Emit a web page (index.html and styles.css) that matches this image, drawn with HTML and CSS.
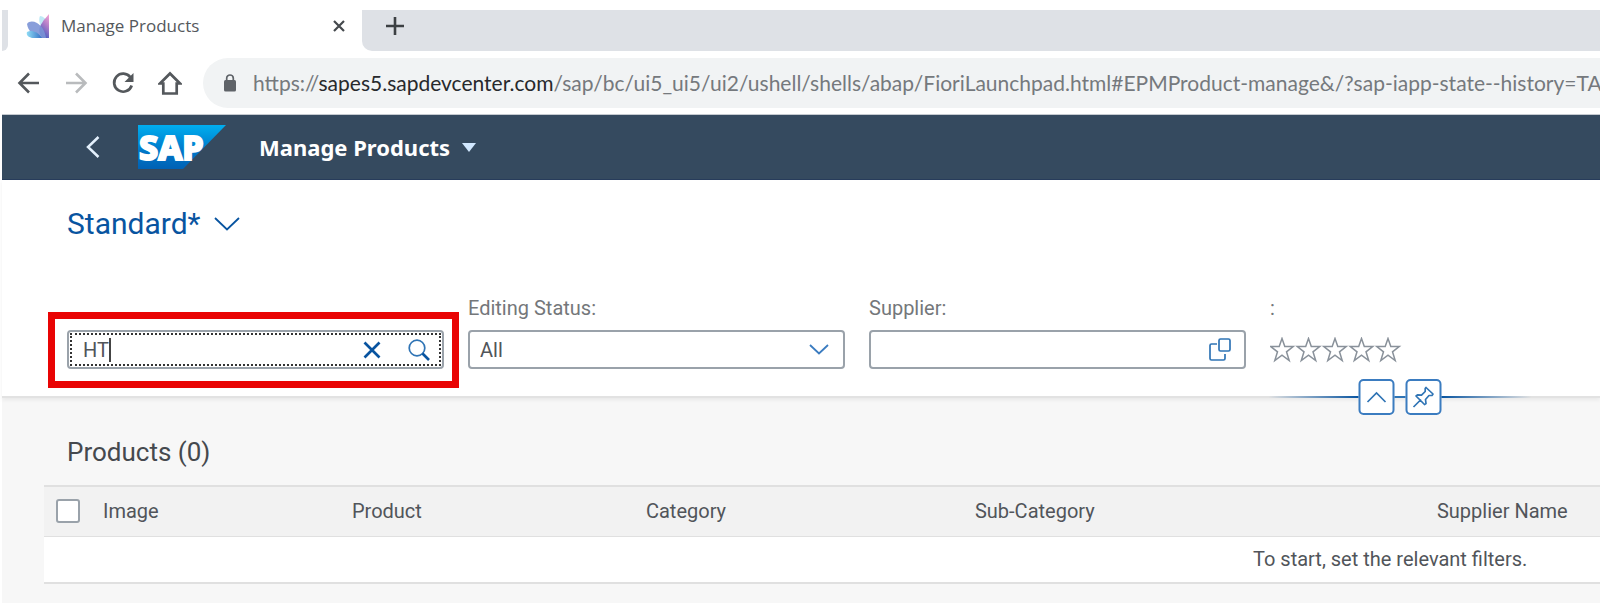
FILE: index.html
```html
<!DOCTYPE html>
<html lang="en">
<head>
<meta charset="utf-8">
<title>Manage Products</title>
<link rel="stylesheet" href="styles.css">
</head>
<body>
<div class="browser">
  <div class="tab-strip">
    <div class="tab-prev"></div>
    <div class="tab">
      <svg class="favicon" width="24" height="24" viewBox="0 0 24 24" aria-hidden="true">
        <defs>
          <linearGradient id="petal" x1="1" y1="0" x2="0.6" y2="1"><stop offset="0" stop-color="#f9a8d4"/><stop offset="0.5" stop-color="#b07cc8"/><stop offset="1" stop-color="#4a5fc0"/></linearGradient>
          <linearGradient id="base" x1="0" y1="0" x2="1" y2="0"><stop offset="0" stop-color="#8fdcf5"/><stop offset="1" stop-color="#3571c6"/></linearGradient>
        </defs>
        <path d="M14 2c3 0 6 3 8 7l-4 8C14 12 12 6 14 2z" fill="#bfe9f5"/>
        <path d="M23 0v24h-7c-4-6-3-11 0-15 2-4 5-6 7-9z" fill="url(#petal)"/>
        <path d="M1 10c2-3 6-3 10-1 5 3 8 8 9 15h-6C7 21 2 17 1 10z" fill="#7b94d6" opacity="0.9"/>
        <path d="M1 18c4-2 10-1 15 6H6c-4-1-6-3-5-6z" fill="url(#base)"/>
      </svg>
      <span class="tab-title">Manage Products</span>
      <button class="icon-button" aria-label="Close tab">
        <svg width="14" height="14" viewBox="0 0 14 14"><path d="M2 2l10 10M12 2L2 12" stroke="#45494d" stroke-width="2.2" fill="none"/></svg>
      </button>
    </div>
    <div class="tab-rest">
      <button class="icon-button" aria-label="New tab">
        <svg width="18" height="18" viewBox="0 0 18 18"><path d="M9 0v18M0 9h18" stroke="#3c4043" stroke-width="2.6" fill="none"/></svg>
      </button>
    </div>
  </div>
  <div class="toolbar">
    <div class="nav">
      <button class="icon-button" aria-label="Back"><svg width="24" height="24" viewBox="0 0 24 24"><path d="M22 12H3M12 2.500L2.500 12l9.500 9.500" stroke="#54585c" stroke-width="2.600" fill="none"/></svg></button>
      <button class="icon-button" aria-label="Forward"><svg width="24" height="24" viewBox="0 0 24 24"><path d="M2 12h19M12 2.500l9.500 9.500-9.500 9.500" stroke="#b9bbbd" stroke-width="2.600" fill="none"/></svg></button>
      <button class="icon-button" aria-label="Reload"><svg width="24" height="24" viewBox="0 0 24 24"><path d="M19.500 6.500A9 9 0 1 0 20.700 14.500" stroke="#54585c" stroke-width="2.700" fill="none"/><path d="M22.500 2v9h-9z" fill="#54585c"/></svg></button>
      <button class="icon-button" aria-label="Home"><svg width="24" height="24" viewBox="0 0 24 24"><path d="M2 12.500L12 2.500l10 10h-3.300V22.500H5.300V12.500z" stroke="#54585c" stroke-width="2.700" fill="none"/></svg></button>
    </div>
    <div class="omnibox">
      <svg width="14" height="18" viewBox="0 0 14 18" aria-hidden="true"><rect x="1" y="6" width="12" height="11.500" rx="1.500" fill="#5f6368"/><path d="M3.700 7V4.300a3.300 3.300 0 0 1 6.600 0V7" stroke="#5f6368" stroke-width="1.700" fill="none"/></svg>
      <div class="url" role="textbox" aria-label="Address">https://<span class="url-host">sapes5.sapdevcenter.com</span>/sap/bc/ui5_ui5/ui2/ushell/shells/abap/FioriLaunchpad.html#EPMProduct-manage&amp;/?sap-iapp-state--history=TASC</div>
    </div>
  </div>

  <header class="shell">
    <button class="icon-button" aria-label="Navigate back"><svg width="14" height="22" viewBox="0 0 14 22"><path d="M12.500 1L2 11l10.500 10" stroke="#e3f0fc" stroke-width="2.500" fill="none"/></svg></button>
    <a class="logo" href="#" aria-label="SAP home">
      <svg width="88" height="44" viewBox="0 0 88 44">
        <defs><linearGradient id="sap" x1="0" y1="0" x2="0" y2="1"><stop offset="0" stop-color="#00aeef"/><stop offset="0.6" stop-color="#0077c8"/><stop offset="1" stop-color="#0061b4"/></linearGradient></defs>
        <path d="M0 0h88L45 44H0z" fill="url(#sap)"/>
        <text class="logo-text" x="1" y="35">SAP</text>
      </svg>
    </a>
    <button class="shell-title">Manage Products
      <svg width="14" height="9" viewBox="0 0 14 9" aria-hidden="true"><path d="M0 0h14L7 9z" fill="#d1e8ff"/></svg>
    </button>
  </header>

  <section class="filters">
    <button class="variant">Standard*
      <svg width="26" height="14" viewBox="0 0 26 14" aria-hidden="true"><path d="M1 1l12 11.500L25 1" stroke="#0854a0" stroke-width="1.800" fill="none"/></svg>
    </button>
    <form class="filter-grid">
      <div class="field search-field">
        <div class="control search">
          <input class="input" type="text" value="HT" aria-label="Search">
          <span class="caret"></span>
          <button type="button" class="icon-button" aria-label="Clear"><svg width="18" height="18" viewBox="0 0 18 18"><path d="M1.500 1.500l15 15M16.500 1.500l-15 15" stroke="#0854a0" stroke-width="2.700" fill="none"/></svg></button>
          <button type="button" class="icon-button" aria-label="Search"><svg width="22" height="22" viewBox="0 0 22 22"><circle cx="9" cy="9" r="7.800" stroke="#2f74b5" stroke-width="1.700" fill="none"/><path d="M14.500 14.500l6.500 6.500" stroke="#0854a0" stroke-width="2.600"/></svg></button>
        </div>
        <div class="highlight"></div>
      </div>
      <div class="field">
        <label class="label" for="status">Editing Status:</label>
        <div class="control">
          <select class="input select" id="status"><option>All</option></select>
          <svg class="select-arrow" width="20" height="11" viewBox="0 0 20 11" aria-hidden="true"><path d="M1 1l9 8.500L19 1" stroke="#3b7cc0" stroke-width="1.800" fill="none"/></svg>
        </div>
      </div>
      <div class="field">
        <label class="label" for="supplier">Supplier:</label>
        <div class="control">
          <input class="input" type="text" id="supplier">
          <button type="button" class="icon-button" aria-label="Value help"><svg width="24" height="24" viewBox="0 0 24 24"><path d="M9 6H3.500A1.500 1.500 0 0 0 2 7.500v13A1.500 1.500 0 0 0 3.500 22h12a1.500 1.500 0 0 0 1.500-1.500V16" stroke="#2f74b5" stroke-width="1.700" fill="none"/><rect x="11" y="1" width="11" height="12" rx="1.500" stroke="#2f74b5" stroke-width="1.700" fill="none"/></svg></button>
        </div>
      </div>
      <div class="field">
        <span class="label">:</span>
        <div class="stars" role="img" aria-label="Rating: 0 of 5">
          <svg width="132" height="26" viewBox="0 0 132 26">
            <defs><path id="star" d="M12 1.500l2.800 8.100h8.400l-6.700 5.200 2.700 8.700-7.200-5.300-7.200 5.300 2.700-8.700L.8 9.600h8.400z" stroke="#89919a" stroke-width="1.500" fill="none"/></defs>
            <use href="#star"/><use href="#star" x="26.500"/><use href="#star" x="53"/><use href="#star" x="79.500"/><use href="#star" x="106"/>
          </svg>
        </div>
      </div>
    </form>
    <div class="header-actions">
      <span class="fade fade-left"></span>
      <button class="square" aria-label="Collapse header"><svg width="20" height="12" viewBox="0 0 20 12"><path d="M1 11l9-9 9 9" stroke="#2f74b5" stroke-width="1.700" fill="none"/></svg></button>
      <span class="link-line"></span>
      <button class="square" aria-label="Pin header"><svg width="22" height="22" viewBox="0 0 22 22"><path d="M1 21l7.500-7.500M13.500 1.500L20.500 8l-1 1.500h-3L13 13.500l.5 4L12 18.500 3.500 10 5 8.800l4 .4 3.700-3.700V2.500z" stroke="#2f74b5" stroke-width="1.700" stroke-linejoin="round" fill="none"/></svg></button>
      <span class="fade fade-right"></span>
    </div>
  </section>

  <main class="content">
    <h1 class="table-title">Products (0)</h1>
    <table class="products">
      <colgroup><col class="c-check"><col class="c-image"><col class="c-product"><col class="c-category"><col class="c-sub"><col></colgroup>
      <thead><tr>
        <th><input class="check" type="checkbox" aria-label="Select all"></th>
        <th>Image</th><th>Product</th><th>Category</th><th>Sub-Category</th><th>Supplier Name</th>
      </tr></thead>
      <tbody><tr><td class="message" colspan="6">To start, set the relevant filters.</td></tr></tbody>
    </table>
  </main>
</div>
</body>
</html>
```
FILE: styles.css
```css
* { box-sizing: border-box; }
body { margin: 0; background: #fff; color: #51555a; font: 20px/24px Roboto, sans-serif; overflow: hidden; }
button { border: 0; padding: 0; background: none; font: inherit; color: inherit; cursor: pointer; }
svg { display: block; flex: none; }
.browser { padding: 10px 0 10px 2px; }
.icon-button { display: flex; align-items: center; justify-content: center; flex: none; }

.tab-strip { display: flex; height: 41px; font-family: "Open Sans", sans-serif; }
.tab-prev { width: 6px; background: #dee1e6; border-bottom-right-radius: 6px; }
.tab { width: 354px; display: flex; align-items: center; padding: 0 16px 9px 18px; }
.tab-title { flex: 1; padding-left: 11px; font-size: 17px; color: #54585c; white-space: nowrap; }
.tab-rest { flex: 1; display: flex; align-items: center; padding: 0 0 9px 24px; background: #dee1e6; border-bottom-left-radius: 10px; }

.toolbar { display: flex; align-items: center; height: 64px; border-bottom: 1px solid #c5cad0; }
.nav { display: flex; gap: 23px; padding-left: 15px; }
.omnibox { flex: 1; min-width: 0; display: flex; align-items: center; gap: 16px; height: 50px; margin-left: 21px; padding-left: 20px; background: #f1f3f4; border-radius: 25px 0 0 25px; }
.url { flex: 1; overflow: hidden; white-space: nowrap; font: 21px/28px Lato, sans-serif; color: #75797d; }
.url-host { color: #27292c; }

.shell { display: flex; align-items: center; height: 65px; padding-left: 84px; background: #354a5f; border-bottom: 1px solid #283d5c; }
.logo { margin-left: 38px; }
.logo-text { font: 800 34px "Noto Sans", sans-serif; fill: #fff; stroke: #fff; stroke-width: 2px; }
.shell-title { display: flex; align-items: center; gap: 12px; margin-left: 33px; font: 700 22px/28px "Noto Sans", sans-serif; color: #fff; }

.filters { position: relative; padding: 27px 20px 27px 65px; background: #fff; border-bottom: 2px solid #e2e2e2; box-shadow: 0 2px 4px #00000010; }
.variant { display: flex; align-items: center; gap: 14px; font-size: 30px; line-height: 34px; color: #0854a0; }
.filter-grid { display: grid; grid-template-columns: repeat(3, minmax(0, 377px)) 1fr; gap: 24px; align-items: end; margin-top: 55px; }
.field { position: relative; min-width: 0; }
.label { display: block; margin-bottom: 10px; color: #74777a; }
.control { position: relative; display: flex; align-items: center; height: 39px; padding-right: 12px; border: 2px solid #9aa2aa; border-radius: 4px; background: #fff; }
.input { flex: 1; width: 100%; min-width: 0; height: 100%; padding: 0 10px; border: 0; outline: 0; background: none; font: inherit; color: #51555a; }
.select { appearance: none; }
.select-arrow { position: absolute; right: 14px; pointer-events: none; }
.search { gap: 27px; }
.search::after { content: ""; position: absolute; inset: 1px; border: 2px dotted #333; pointer-events: none; }
.search .input { padding-left: 14px; }
.caret { position: absolute; left: 40px; top: 6px; width: 2px; height: 24px; background: #444; }
.highlight { position: absolute; inset: -18px -15px -19px -19px; border: 7px solid #e90404; pointer-events: none; }
.stars { display: flex; align-items: center; height: 39px; }

.header-actions { position: absolute; left: 87.5%; bottom: -19px; transform: translateX(-50%); display: flex; align-items: center; }
.square { display: flex; align-items: center; justify-content: center; width: 36px; height: 36px; border: 2px solid #3b7cc0; border-radius: 5px; background: #fff; }
.fade { width: 90px; height: 2px; }
.fade-left { background: linear-gradient(to left, #0854a0, #0854a000); }
.fade-right { background: linear-gradient(to right, #0854a0, #0854a000); }
.link-line { width: 11px; height: 2px; background: #2f74b5; }

.content { padding: 37px 0 19px 42px; background: #f7f7f7; }
.table-title { margin: 0 0 16px 23px; font-size: 26px; line-height: 34px; font-weight: 400; color: #45494e; }
.products { width: 100%; table-layout: fixed; border-collapse: collapse; }
.products th { height: 50px; padding: 0 0 0 9px; background: #f2f2f2; border-top: 2px solid #e0e0e0; border-bottom: 1px solid #e0e0e0; font-weight: 400; text-align: left; white-space: nowrap; }
.products th:first-child { padding-left: 12px; }
.c-check { width: 50px; }
.c-image { width: 16%; }
.c-product { width: 294px; }
.c-category { width: 329px; }
.c-sub { width: 462px; }
.check { appearance: none; display: block; width: 24px; height: 24px; margin: 0; border: 2px solid #9aa2aa; border-radius: 3px; background: #fff; }
.message { height: 47px; padding: 0 0 0 1209px; background: #fff; border-bottom: 2px solid #e0e0e0; white-space: nowrap; }
```
